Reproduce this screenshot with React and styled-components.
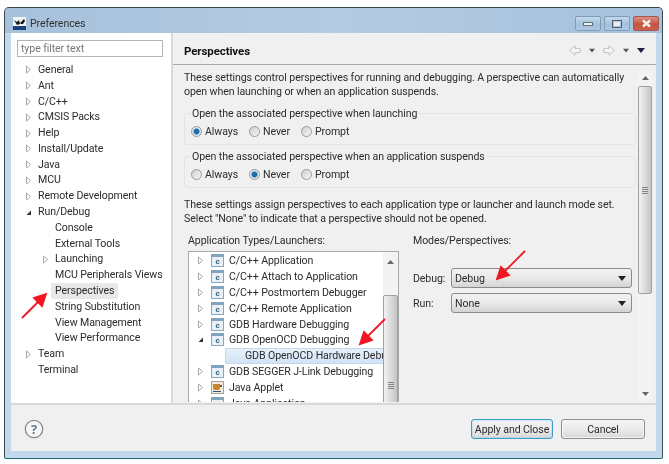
import React from "react";
import styled, { createGlobalStyle } from "styled-components";

const Global = createGlobalStyle`
  html, body {
    margin: 0;
    background: #fff;
  }
  body {
    font-family: "Roboto", "Open Sans", sans-serif;
    font-size: 10.6px;
    letter-spacing: -0.1px;
    color: #2c2c2c;
  }
`;

const Page = styled.div`
  position: relative;
  width: 669px;
  height: 464px;
  padding: 7px 6px 5px 4px;
  box-sizing: border-box;
  filter: blur(0.45px);
  overflow: hidden;
`;

const Window = styled.div`
  height: 100%;
  box-sizing: border-box;
  display: flex;
  flex-direction: column;
  border: 1px solid #39474e;
  border-bottom-color: #1f6f7c;
  border-radius: 5px 5px 2px 2px;
  background: #c3d8ec;
  padding: 0 6px 7px 6px;
`;

const TitleBar = styled.div`
  flex: none;
  height: 25px;
  margin: 0 -6px;
  padding: 5px 2px 0 8px;
  box-sizing: border-box;
  display: flex;
  align-items: center;
  gap: 4px;
  border-radius: 4px 4px 0 0;
  background: linear-gradient(90deg, #a6c1dc 0%, #b4cbe2 50%, #a6c1dc 100%);
`;

const TitleText = styled.span`
  flex: 1;
  padding-top: 1px;
  color: #333;
`;

const WinButtons = styled.div`
  display: flex;
  gap: 3px;
  margin: 0 1px 0 0;
  align-self: flex-start;
  padding-top: 3px;
`;

const WinButton = styled.div`
  width: 26px;
  height: 15px;
  box-sizing: border-box;
  display: flex;
  align-items: center;
  justify-content: center;
  border: 1px solid ${p => (p.$close ? "#a5574c" : "#7f9cb8")};
  border-radius: 2px;
  background: ${p =>
    p.$close
      ? "linear-gradient(#dc8f85, #c4543f 55%, #c8614f)"
      : "linear-gradient(#c5d9ec, #a3c0db 55%, #afc9e2)"};
`;

const Client = styled.div`
  flex: 1;
  min-height: 0;
  display: flex;
  flex-direction: column;
  background: #f0f0f0;
`;

const Split = styled.div`
  flex: 1;
  min-height: 0;
  display: flex;
  border-bottom: 2px solid #d9d9d9;
`;

const Sidebar = styled.div`
  flex: none;
  width: 162px;
  padding: 7px 0 0 6px;
  box-sizing: border-box;
  background: #fff;
  border-right: 2px solid #d9d9d9;
`;

const Filter = styled.div`
  width: 146px;
  height: 17px;
  box-sizing: border-box;
  border: 1px solid #b4b4b4;
  padding-left: 3px;
  line-height: 16px;
  color: #777;
  background: #fff;
`;

const NavTree = styled.div`
  margin-top: 5px;
`;

const Row = styled.div`
  height: 15.8px;
  display: flex;
  align-items: center;
  white-space: nowrap;
  padding-left: ${p => p.$indent}px;
`;

const Twisty = styled.span`
  flex: none;
  width: 14px;
  display: flex;
  justify-content: flex-start;
  padding-left: 1px;
  box-sizing: border-box;
`;

const RowLabel = styled.span`
  padding: 0 ${p => (p.$hl ? "4px" : "0")};
  margin-left: ${p => (p.$hl ? "-4px" : "0")};
  height: 16px;
  line-height: 16px;
  border-radius: 2px;
  background: ${p => (p.$hl ? "#e8e8e8" : "transparent")};
`;

const Main = styled.div`
  flex: 1;
  min-width: 0;
  display: flex;
  flex-direction: column;
`;

const Header = styled.div`
  flex: none;
  height: 27px;
  display: flex;
  align-items: center;
  justify-content: space-between;
  padding: 4px 11px 0 11px;
  border-bottom: 1px solid #a8a8a8;
`;

const HeaderTitle = styled.div`
  font-size: 11.5px;
  font-weight: 700;
  color: #111;
`;

const Nav = styled.div`
  display: flex;
  align-items: center;
  gap: 8px;
`;

const Body = styled.div`
  flex: 1;
  min-height: 0;
  display: flex;
  padding: 5px 4px 1px 11px;
  gap: 2px;
`;

const Content = styled.div`
  flex: 1;
  min-width: 0;
  overflow: hidden;
`;

const Para = styled.p`
  margin: ${p => p.$top}px 0 0 0;
  line-height: 14px;
  white-space: nowrap;
`;

const Group = styled.fieldset`
  margin: ${p => p.$top}px 0 0 0;
  padding: 0 0 0 6px;
  height: 39px;
  box-sizing: border-box;
  border: 1px solid #dde6ee;
  border-radius: 3px;
`;

const Legend = styled.legend`
  padding: 0 1px;
  line-height: 15px;
`;

const Radios = styled.div`
  display: flex;
  height: 17px;
  margin-top: 2px;
  align-items: center;
`;

const Radio = styled.span`
  display: flex;
  align-items: center;
  gap: 3px;
  width: ${p => p.$w}px;
`;

const Dot = styled.span`
  flex: none;
  width: 11px;
  height: 11px;
  box-sizing: border-box;
  border-radius: 50%;
  border: 1px solid #9a9a9a;
  background: ${p =>
    p.$on
      ? "radial-gradient(circle, #1c6fa8 0 2.5px, #dfe8ee 3.5px)"
      : "linear-gradient(135deg, #cfcfcf, #f6f6f6)"};
`;

const Columns = styled.div`
  display: flex;
  margin: 7px 0 0 4px;
`;

const LeftCol = styled.div`
  flex: none;
  width: 225px;
`;

const RightCol = styled.div`
  flex: 1;
`;

const ColTitle = styled.div`
  line-height: 16px;
  margin-bottom: 2px;
`;

const LaunchTree = styled.div`
  width: 211px;
  height: 160px;
  box-sizing: border-box;
  display: flex;
  background: #fff;
  border: 1px solid #a9a9a9;
  padding-left: 8px;
`;

const LaunchRows = styled.div`
  flex: 1;
  min-width: 0;
  padding-top: 1px;
  overflow: hidden;
`;

const LaunchRow = styled.div`
  height: 15.8px;
  display: flex;
  align-items: center;
  gap: 5px;
  white-space: nowrap;
  overflow: hidden;
`;

const LaunchTwisty = styled.span`
  flex: none;
  width: 9px;
  display: flex;
`;

const CIcon = styled.span`
  flex: none;
  width: 13px;
  height: 13px;
  box-sizing: border-box;
  border: 1px solid #8fa6b5;
  border-top: 3px solid #7fa4c0;
  background: #e9f1f6;
  color: #245f85;
  font-size: 8px;
  font-weight: 700;
  line-height: 9px;
  text-align: center;
`;

const Selected = styled.div`
  height: 15.8px;
  box-sizing: border-box;
  margin: 0 0 0 28px;
  padding-left: 19px;
  line-height: 14px;
  white-space: nowrap;
  overflow: hidden;
  border-radius: 2px 0 0 2px;
  border: 1px solid #c4d8ee;
  border-width: 1px 0 1px 1px;
  background: linear-gradient(#e6f0fa, #d2e3f6);
`;

const Scrollbar = styled.div`
  flex: none;
  width: ${p => p.$w}px;
  display: flex;
  flex-direction: column;
  align-items: center;
  background: #f3f3f3;
`;

const ScrollArrow = styled.div`
  flex: none;
  height: ${p => p.$h}px;
  display: flex;
  align-items: ${p => (p.$top ? "flex-start" : "center")};
  padding-top: ${p => (p.$top ? "8px" : "0")};
  box-sizing: border-box;
  justify-content: center;
`;

const Thumb = styled.div`
  width: 100%;
  box-sizing: border-box;
  height: ${p => p.$h}px;
  display: flex;
  align-items: ${p => (p.$low ? "flex-start" : "center")};
  padding-top: ${p => (p.$low ? "86px" : "0")};
  justify-content: center;
  border: 1px solid #a0a0a0;
  border-radius: 2px;
  background: linear-gradient(90deg, #f2f2f2, #d7d7d7 60%, #c4c4c4);
`;

const Grip = styled.div`
  width: 6px;
  height: 7px;
  background: repeating-linear-gradient(#888 0 1px, transparent 1px 2px);
`;

const Spacer = styled.div`
  flex: 1;
`;

const ModeTitle = styled(ColTitle)`
  margin-bottom: 19px;
`;

const ModeRow = styled.div`
  display: flex;
  align-items: center;
  height: 20px;
  margin-bottom: 5px;
`;

const ModeLabel = styled.span`
  flex: none;
  width: 38px;
`;

const Combo = styled.div`
  width: 181px;
  height: 20px;
  box-sizing: border-box;
  display: flex;
  align-items: center;
  justify-content: space-between;
  padding: 0 5px 0 3px;
  border: 1px solid #8b8b8b;
  border-radius: 3px;
  background: linear-gradient(#f2f2f2, #e9e9e9 50%, #d4d4d4);
`;

const Footer = styled.div`
  flex: none;
  height: 46px;
  box-sizing: border-box;
  display: flex;
  align-items: center;
  padding: 2px 11px 0 13px;
  gap: 8px;
`;

const Button = styled.div`
  width: ${p => p.$w}px;
  height: 20px;
  box-sizing: border-box;
  display: flex;
  align-items: center;
  justify-content: center;
  white-space: nowrap;
  border: 1px solid ${p => (p.$primary ? "#3c9cc8" : "#8f8f8f")};
  border-radius: 3px;
  box-shadow: ${p => (p.$primary ? "inset 0 0 2px #7fd4f4" : "inset 0 0 0 1px #f6f6f6")};
  background: linear-gradient(#f4f4f4, #ebebeb 50%, #d8d8d8);
`;

const Overlay = styled.svg`
  position: absolute;
  left: 0;
  top: 0;
  pointer-events: none;
`;

const Tri = ({ open }) =>
  open ? (
    <svg width="7" height="7" viewBox="0 0 7 7">
      <path d="M6 1.5V6H1.5z" fill="#333" />
    </svg>
  ) : (
    <svg width="7" height="9" viewBox="0 0 7 9">
      <path d="M1.5 1 5.5 4.5 1.5 8z" fill="#fff" stroke="#a8a8a8" />
    </svg>
  );

const Caret = ({ color = "#222", w = 8 }) => (
  <svg width={w} height="5" viewBox="0 0 8 5">
    <path d="M0 0h8L4 5z" fill={color} />
  </svg>
);

const SmallArrow = ({ up }) => (
  <svg width="7" height="4" viewBox="0 0 7 4">
    <path d={up ? "M0 4h7L3.5 0z" : "M0 0h7L3.5 4z"} fill="#666" />
  </svg>
);

const NavArrow = ({ flip }) => (
  <svg width="12" height="11" viewBox="0 0 12 11" style={flip ? { transform: "scaleX(-1)" } : undefined}>
    <path d="M.8 5.5 6 .8v2.6h5.2v4.2H6v2.6z" fill="#f4f4f4" stroke="#c2c2c2" />
  </svg>
);

const AppIcon = () => (
  <svg width="13" height="13" viewBox="0 0 13 13">
    <rect width="13" height="13" fill="#1d3f78" />
    <rect width="13" height="9" fill="#f2f2f2" />
    <path d="M1 3 4 5 6 3l1 4-3 1zM7 6l4-4 1 2-2 3H8z" fill="#15181f" />
  </svg>
);

const JavaIcon = () => (
  <svg width="13" height="13" viewBox="0 0 13 13">
    <rect x=".5" y=".5" width="12" height="12" fill="#f4ead6" stroke="#9aa3aa" />
    <path d="M2 3h7v4a2 2 0 0 1-2 2H4a2 2 0 0 1-2-2z" fill="#c8862a" />
    <path d="M9 4h2v2H9z" fill="#5a5a7a" />
    <path d="M2 10.500h8" stroke="#3f4f80" />
  </svg>
);

const navItems = [
  { label: "General", twisty: true },
  { label: "Ant", twisty: true },
  { label: "C/C++", twisty: true },
  { label: "CMSIS Packs", twisty: true },
  { label: "Help", twisty: true },
  { label: "Install/Update", twisty: true },
  { label: "Java", twisty: true },
  { label: "MCU", twisty: true },
  { label: "Remote Development", twisty: true },
  { label: "Run/Debug", twisty: true, open: true },
  { label: "Console", level: 1 },
  { label: "External Tools", level: 1 },
  { label: "Launching", level: 1, twisty: true },
  { label: "MCU Peripherals Views", level: 1 },
  { label: "Perspectives", level: 1, hl: true },
  { label: "String Substitution", level: 1 },
  { label: "View Management", level: 1 },
  { label: "View Performance", level: 1 },
  { label: "Team", twisty: true },
  { label: "Terminal" }
];

const launchers = [
  "C/C++ Application",
  "C/C++ Attach to Application",
  "C/C++ Postmortem Debugger",
  "C/C++ Remote Application",
  "GDB Hardware Debugging"
];

const renderLauncher = (label, icon, open) => (
  <LaunchRow key={label}>
    <LaunchTwisty>
      <Tri open={open} />
    </LaunchTwisty>
    {icon}
    <span>{label}</span>
  </LaunchRow>
);

export default function App() {
  return (
    <Page>
      <Global />
      <Window>
        <TitleBar>
          <AppIcon />
          <TitleText>Preferences</TitleText>
          <WinButtons>
            <WinButton>
              <svg width="10" height="4"><rect x=".5" y=".5" width="9" height="3" fill="#eef3f8" stroke="#5c6f80" /></svg>
            </WinButton>
            <WinButton>
              <svg width="10" height="8"><rect x=".5" y=".5" width="9" height="7" fill="none" stroke="#4f6172" /><rect x="2" y="2" width="6" height="4" fill="#e6eef6" /></svg>
            </WinButton>
            <WinButton $close>
              <svg width="11" height="9" viewBox="0 0 11 9"><path d="M2 1.500 9 7.500M9 1.500 2 7.500" stroke="#f4f0ee" strokeWidth="2.400" /></svg>
            </WinButton>
          </WinButtons>
        </TitleBar>
        <Client>
          <Split>
            <Sidebar>
              <Filter>type filter text</Filter>
              <NavTree>
                {navItems.map(item => (
                  <Row key={item.label} $indent={item.level ? 24 : 7}>
                    <Twisty>{item.twisty && <Tri open={item.open} />}</Twisty>
                    <RowLabel $hl={item.hl}>{item.label}</RowLabel>
                  </Row>
                ))}
              </NavTree>
            </Sidebar>
            <Main>
              <Header>
                <HeaderTitle>Perspectives</HeaderTitle>
                <Nav>
                  <NavArrow />
                  <Caret color="#555" w={6} />
                  <NavArrow flip />
                  <Caret color="#555" w={6} />
                  <Caret color="#2a1a4a" />
                </Nav>
              </Header>
              <Body>
                <Content>
                  <Para $top={1}>
                    These settings control perspectives for running and debugging. A perspective can automatically
                    <br />
                    open when launching or when an application suspends.
                  </Para>
                  <Group $top={7}>
                    <Legend>Open the associated perspective when launching</Legend>
                    <Radios>
                      <Radio $w={58}><Dot $on />Always</Radio>
                      <Radio $w={52}><Dot />Never</Radio>
                      <Radio $w={60}><Dot />Prompt</Radio>
                    </Radios>
                  </Group>
                  <Group $top={4}>
                    <Legend>Open the associated perspective when an application suspends</Legend>
                    <Radios>
                      <Radio $w={58}><Dot />Always</Radio>
                      <Radio $w={52}><Dot $on />Never</Radio>
                      <Radio $w={60}><Dot />Prompt</Radio>
                    </Radios>
                  </Group>
                  <Para $top={10}>
                    These settings assign perspectives to each application type or launcher and launch mode set.
                    <br />
                    Select "None" to indicate that a perspective should not be opened.
                  </Para>
                  <Columns>
                    <LeftCol>
                      <ColTitle>Application Types/Launchers:</ColTitle>
                      <LaunchTree>
                        <LaunchRows>
                          {launchers.map(l => renderLauncher(l, <CIcon>c</CIcon>))}
                          {renderLauncher("GDB OpenOCD Debugging", <CIcon>c</CIcon>, true)}
                          <Selected>GDB OpenOCD Hardware Debugging</Selected>
                          {renderLauncher("GDB SEGGER J-Link Debugging", <CIcon>c</CIcon>)}
                          {renderLauncher("Java Applet", <JavaIcon />)}
                          {renderLauncher("Java Application", <CIcon>c</CIcon>)}
                        </LaunchRows>
                        <Scrollbar $w={15}>
                          <ScrollArrow $h={43} $top><SmallArrow up /></ScrollArrow>
                          <Thumb $h={200} $low><Grip /></Thumb>
                        </Scrollbar>
                      </LaunchTree>
                    </LeftCol>
                    <RightCol>
                      <ModeTitle>Modes/Perspectives:</ModeTitle>
                      <ModeRow>
                        <ModeLabel>Debug:</ModeLabel>
                        <Combo>Debug<Caret /></Combo>
                      </ModeRow>
                      <ModeRow>
                        <ModeLabel>Run:</ModeLabel>
                        <Combo>None<Caret /></Combo>
                      </ModeRow>
                    </RightCol>
                  </Columns>
                </Content>
                <Scrollbar $w={14}>
                  <ScrollArrow $h={16}><SmallArrow up /></ScrollArrow>
                  <Thumb $h={208}><Grip /></Thumb>
                  <Spacer />
                  <ScrollArrow $h={16}><SmallArrow /></ScrollArrow>
                </Scrollbar>
              </Body>
            </Main>
          </Split>
          <Footer>
            <svg width="20" height="20" viewBox="0 0 20 20">
              <circle cx="10" cy="10" r="8.700" fill="#f6f6f6" stroke="#8a8a8a" strokeWidth="1.300" />
              <text x="10" y="14.500" textAnchor="middle" fontSize="13" fontWeight="700" fill="#6c7a86" fontFamily="Open Sans">?</text>
            </svg>
            <Spacer />
            <Button $w={82} $primary>Apply and Close</Button>
            <Button $w={84}>Cancel</Button>
          </Footer>
        </Client>
      </Window>
      <Overlay width="669" height="464" viewBox="0 0 669 464">
        <g stroke="#f01622" strokeWidth="1.800" fill="#f01622">
          <path d="M22 318 41 299" />
          <path d="M46 294 34 298 42 306z" />
          <path d="M385 319 366 338" />
          <path d="M360 344 364 332 372 340z" />
          <path d="M525 251 503 273" />
          <path d="M497 279 501 267 509 275z" />
        </g>
      </Overlay>
    </Page>
  );
}
